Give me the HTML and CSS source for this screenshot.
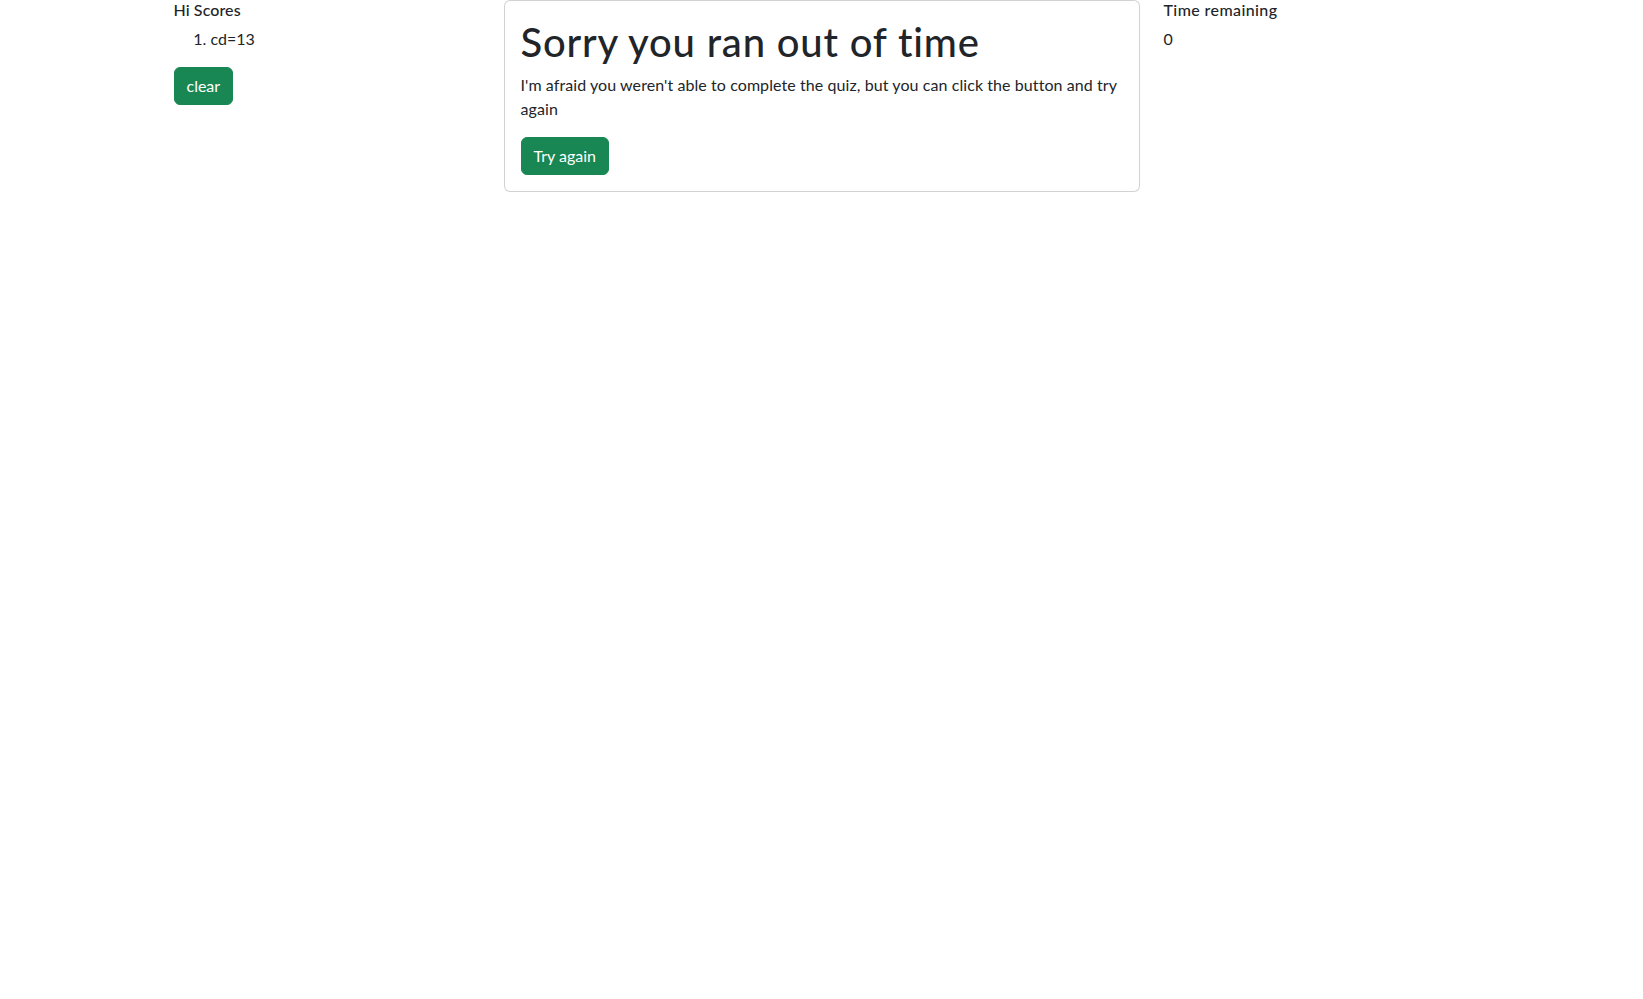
FILE: index.html
```html
<!DOCTYPE html>
<html lang="en">
<head>
<meta charset="utf-8">
<title>Quiz</title>
<link rel="stylesheet" href="styles.css">
</head>
<body>
<div class="layout">
  <aside class="side">
    <h6 class="side-title">Hi Scores</h6>
    <ol class="score-list">
      <li>cd=13</li>
    </ol>
    <button class="btn btn-success" type="button">clear</button>
  </aside>
  <main class="card">
    <div class="card-body">
      <h1 class="card-title">Sorry you ran out of time</h1>
      <p class="card-text">I'm afraid you weren't able to complete the quiz, but you can click the button and try again</p>
      <button class="btn btn-success" type="button">Try again</button>
    </div>
  </main>
  <aside class="side">
    <h6 class="side-title side-title-wide">Time remaining</h6>
    <div class="timer-value">0</div>
  </aside>
</div>
</body>
</html>
```
FILE: styles.css
```css
* { box-sizing: border-box; }
body {
  margin: 0;
  font-family: Lato, "Noto Sans", sans-serif;
  font-size: 16px;
  line-height: 1.5;
  color: #212529;
  background: #fff;
}
.layout {
  width: 1296px;
  margin: 0 auto;
  display: grid;
  grid-template-columns: repeat(4, 1fr);
  column-gap: 24px;
  align-items: start;
}
.side-title {
  margin: 0 0 8px;
  font-size: 16px;
  font-weight: 500;
  line-height: 1.2;
  letter-spacing: 0.1px;
}
.side-title-wide {
  letter-spacing: 0.4px;
}
.score-list {
  margin: 0 0 16px;
  padding-left: 37px;
}
.timer-value {
  line-height: 24px;
}
.card {
  grid-column: span 2;
  border: 1px solid rgba(0, 0, 0, 0.175);
  border-radius: 6px;
  background: #fff;
}
.card-body {
  padding: 16px;
}
.card-title {
  margin: 0 0 8px;
  padding-top: 1px;
  height: 48px;
  font-size: 40px;
  font-weight: 500;
  line-height: 1.2;
  letter-spacing: 0.82px;
}
.card-text {
  margin: 0 0 16px;
  letter-spacing: 0.08px;
}
.btn {
  display: inline-block;
  padding: 6px 12px;
  font-family: inherit;
  font-size: 16px;
  line-height: 24px;
  border: 1px solid transparent;
  border-radius: 6px;
  cursor: pointer;
}
.btn-success {
  color: #fff;
  background: #198754;
  border-color: #198754;
}
```
